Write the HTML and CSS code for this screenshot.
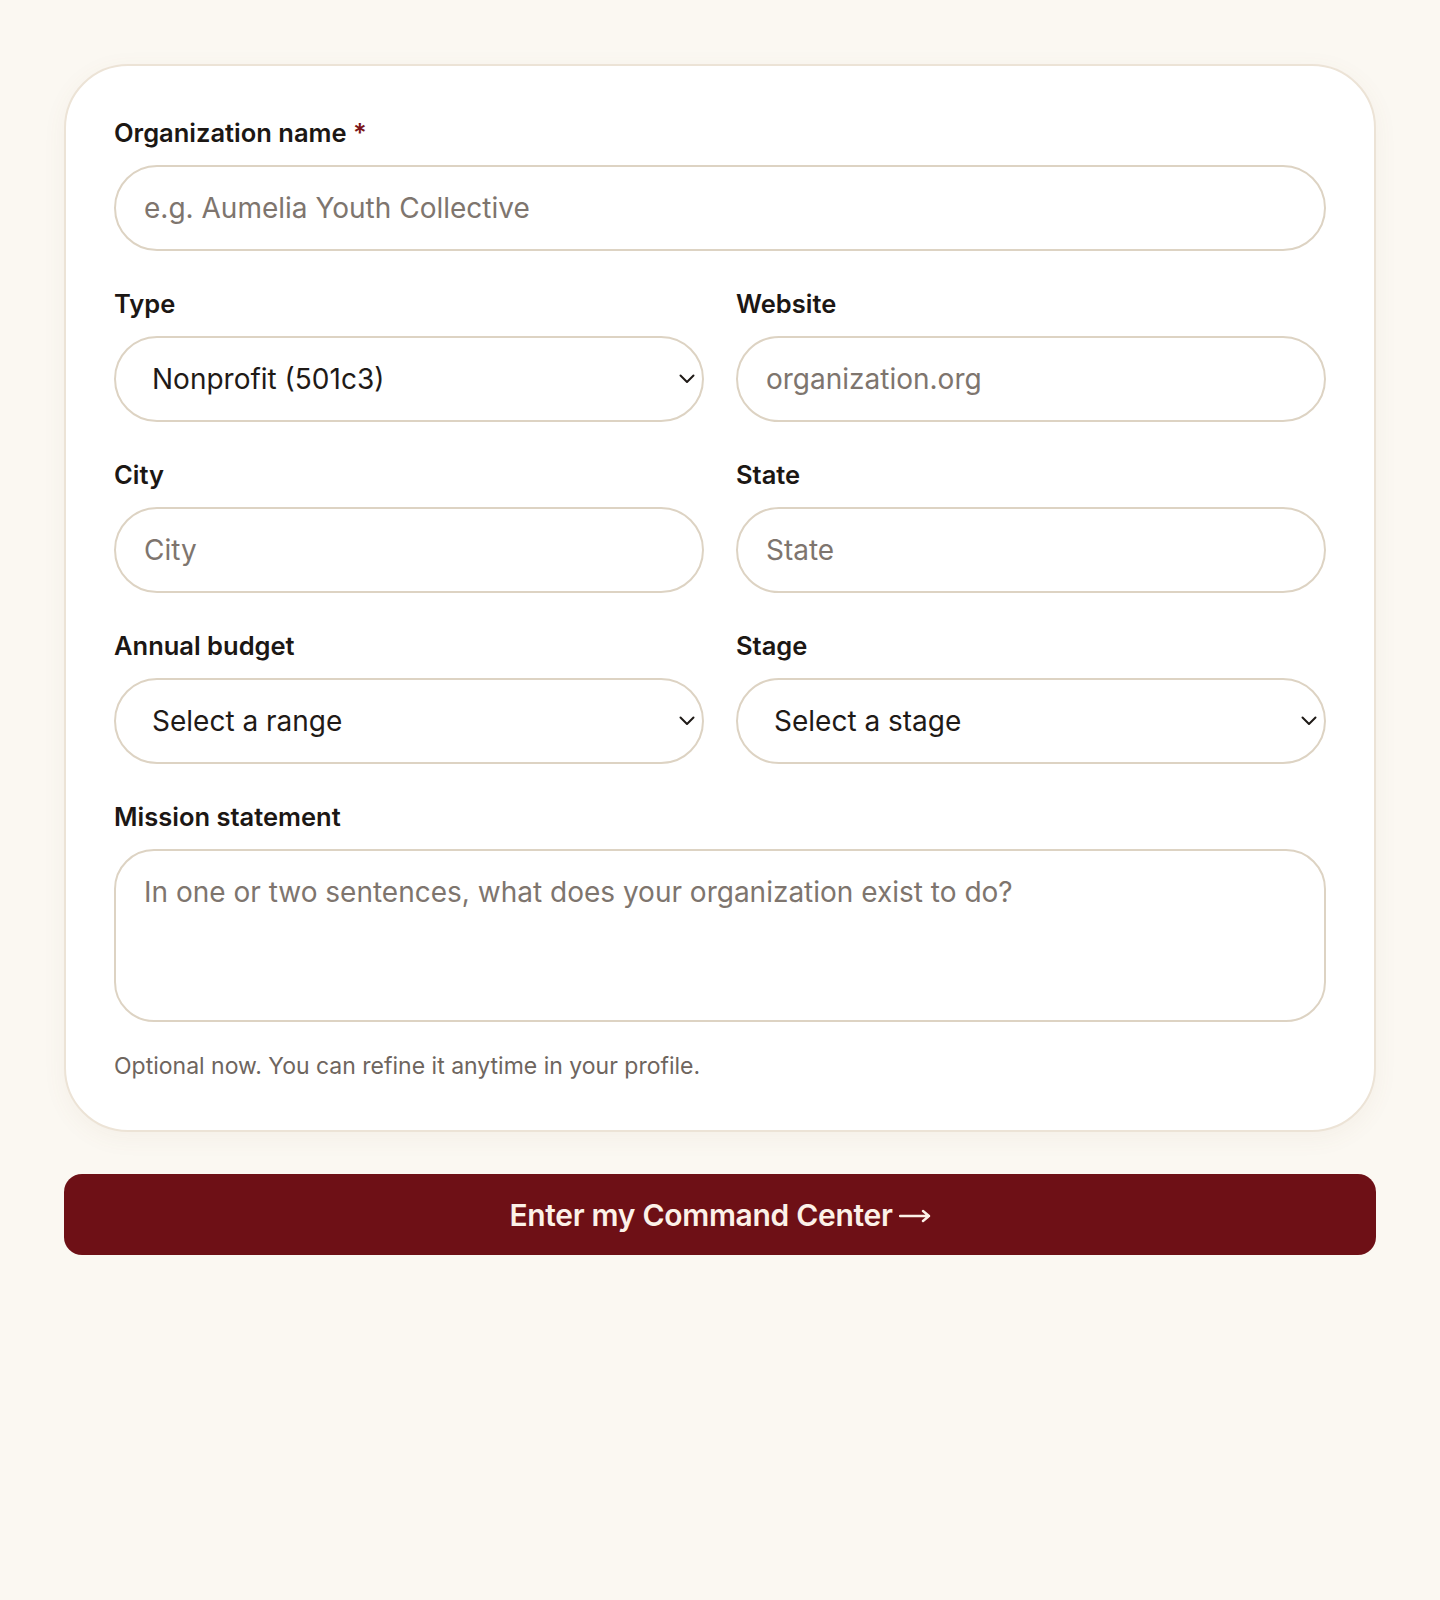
FILE: index.html
```html
<!DOCTYPE html>
<html lang="en">
<head>
<meta charset="utf-8">
<title>Organization profile</title>
<link rel="stylesheet" href="styles.css">
</head>
<body>
<main class="page">
  <form class="card">
    <div class="field">
      <label class="label" for="org">Organization name <span class="req">*</span></label>
      <input class="control" id="org" type="text" placeholder="e.g. Aumelia Youth Collective">
    </div>
    <div class="row">
      <div class="field">
        <label class="label" for="type">Type</label>
        <div class="select-wrap">
          <select class="control select" id="type">
            <option>Nonprofit (501c3)</option>
          </select>
          <svg class="chev" width="16" height="10" viewBox="0 0 16 10" aria-hidden="true"><path d="M1.5 1.5 L8 8 L14.5 1.5" fill="none" stroke="#1f1a17" stroke-width="2" stroke-linecap="round" stroke-linejoin="round"/></svg>
        </div>
      </div>
      <div class="field">
        <label class="label" for="web">Website</label>
        <input class="control" id="web" type="text" placeholder="organization.org">
      </div>
    </div>
    <div class="row">
      <div class="field">
        <label class="label" for="city">City</label>
        <input class="control" id="city" type="text" placeholder="City">
      </div>
      <div class="field">
        <label class="label" for="state">State</label>
        <input class="control" id="state" type="text" placeholder="State">
      </div>
    </div>
    <div class="row">
      <div class="field">
        <label class="label" for="budget">Annual budget</label>
        <div class="select-wrap">
          <select class="control select" id="budget">
            <option>Select a range</option>
          </select>
          <svg class="chev" width="16" height="10" viewBox="0 0 16 10" aria-hidden="true"><path d="M1.5 1.5 L8 8 L14.5 1.5" fill="none" stroke="#1f1a17" stroke-width="2" stroke-linecap="round" stroke-linejoin="round"/></svg>
        </div>
      </div>
      <div class="field">
        <label class="label" for="stage">Stage</label>
        <div class="select-wrap">
          <select class="control select" id="stage">
            <option>Select a stage</option>
          </select>
          <svg class="chev" width="16" height="10" viewBox="0 0 16 10" aria-hidden="true"><path d="M1.5 1.5 L8 8 L14.5 1.5" fill="none" stroke="#1f1a17" stroke-width="2" stroke-linecap="round" stroke-linejoin="round"/></svg>
        </div>
      </div>
    </div>
    <div class="field">
      <label class="label" for="mission">Mission statement</label>
      <textarea class="control area" id="mission" placeholder="In one or two sentences, what does your organization exist to do?"></textarea>
      <p class="hint">Optional now. You can refine it anytime in your profile.</p>
    </div>
  </form>
  <button class="cta" type="button">Enter my Command Center<svg class="arrow" width="32" height="14" viewBox="0 0 32 14" aria-hidden="true"><path d="M1 7 H30 M24 2 L30 7 L24 12" fill="none" stroke="#fcf1e8" stroke-width="2.4" stroke-linecap="round" stroke-linejoin="round"/></svg></button>
</main>
</body>
</html>
```

FILE: styles.css
```css
* { box-sizing: border-box; }

html, body {
  margin: 0;
  padding: 0;
  background: #fbf8f2;
  font-family: Inter, "Noto Sans", "Liberation Sans", sans-serif;
  color: #1c1714;
}

.page {
  width: 1312px;
  margin: 0 auto;
  padding-top: 64px;
  display: flex;
  flex-direction: column;
  gap: 42px;
}

.card {
  background: #ffffff;
  border: 2px solid #ece3d6;
  border-radius: 64px;
  padding: 52px 48px 49px;
  display: flex;
  flex-direction: column;
  gap: 38px;
  box-shadow: 0 6px 24px rgba(140, 110, 70, 0.06);
}

.row {
  display: grid;
  grid-template-columns: 1fr 1fr;
  gap: 32px;
}

.field {
  display: flex;
  flex-direction: column;
  gap: 17px;
}

.label {
  font-size: 25.5px;
  line-height: 30px;
  font-weight: 600;
  color: #1c1714;
}

.req { color: #7a1419; }

.control {
  width: 100%;
  height: 86px;
  border: 2px solid #ddd3c3;
  border-radius: 43px;
  background: #ffffff;
  padding: 0 28px;
  font-family: inherit;
  font-size: 28px;
  color: #1f1a17;
  outline: none;
  margin: 0;
}

.control::placeholder { color: #7e756e; opacity: 1; }

.select-wrap { position: relative; }

.select {
  appearance: none;
  -webkit-appearance: none;
  padding-left: 36px;
  padding-right: 56px;
}

.chev {
  position: absolute;
  right: 9px;
  top: 38px;
  pointer-events: none;
}

.area {
  height: 173px;
  border-radius: 40px;
  padding: 22px 28px;
  line-height: 38px;
  resize: none;
  display: block;
}

.hint {
  margin: 12px 0 0;
  font-size: 23px;
  line-height: 30px;
  color: #6e655e;
}

.cta {
  width: 100%;
  height: 81px;
  border: none;
  border-radius: 18px;
  background: #6e1016;
  color: #fcf1e8;
  font-family: inherit;
  font-size: 30px;
  font-weight: 600;
  letter-spacing: -0.3px;
  cursor: pointer;
  display: flex;
  align-items: center;
  justify-content: center;
  gap: 6px;
}

.arrow { margin-top: 3px; }
```
